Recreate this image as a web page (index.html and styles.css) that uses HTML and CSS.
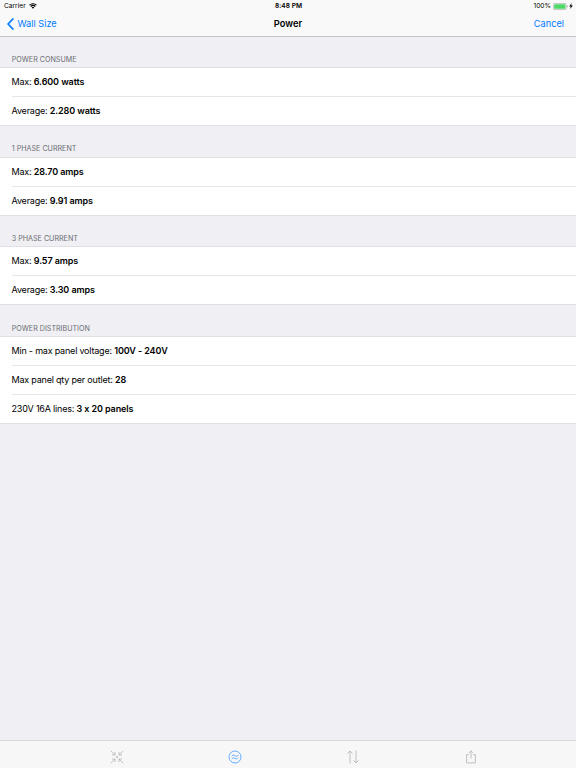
FILE: index.html
```html
<!DOCTYPE html>
<html lang="en">
<head>
    <meta charset="UTF-8">
    <meta name="viewport" content="width=device-width, initial-scale=1.0">
    <title>Power</title>
    <link rel="stylesheet" href="styles.css">
</head>
<body>
    <header class="header">
      <div class="status">
        <div class="carrier">
          <span>Carrier</span>
          <svg class="wifi" viewBox="0 0 16 12">
            <path d="M1 4.4a10 10 0 0 1 14 0M3.4 7a6.6 6.6 0 0 1 9.2 0" fill="none" stroke="#000" stroke-width="2.2"/>
            <path d="M8 11.6L5.4 9a3.7 3.7 0 0 1 5.2 0z"/>
          </svg>
        </div>
        <div class="time">8:48 PM</div>
        <div class="battery">
          <span>100%</span>
          <svg class="batteryIcon" viewBox="0 0 15 7">
            <rect x="0.4" y="0.4" width="12.8" height="6.2" rx="1.3" fill="#fff" stroke="#999" stroke-width="0.6"/>
            <rect x="1.2" y="1.2" width="11.2" height="4.6" rx="0.6" fill="#4cd964"/>
            <path d="M14 2.4v2.2q0.8-0.4 0.8-1.1t-0.8-1.1z" fill="#999"/>
          </svg>
          <svg class="bolt" viewBox="0 0 4 6">
            <path d="M2.6 0L0.2 3.4h1.5L1.2 6l2.6-3.6H2.2z"/>
          </svg>
        </div>
      </div>
      <nav class="navbar">
        <a class="back">
          <svg viewBox="0 0 7 12">
            <path d="M6.4 0.5L1.1 6l5.3 5.5" fill="none" stroke="#007aff" stroke-width="1.7"/>
          </svg>
          <span>Wall Size</span>
        </a>
        <h1 class="title">Power</h1>
        <a class="cancel">Cancel</a>
      </nav>
    </header>

    <main class="content">
      <section>
        <h2>POWER CONSUME</h2>
        <ul class="list">
          <li>Max: <b>6.600 watts</b></li>
          <li>Average: <b>2.280 watts</b></li>
        </ul>
      </section>
      <section>
        <h2>1 PHASE CURRENT</h2>
        <ul class="list">
          <li>Max: <b>28.70 amps</b></li>
          <li>Average: <b>9.91 amps</b></li>
        </ul>
      </section>
      <section>
        <h2>3 PHASE CURRENT</h2>
        <ul class="list">
          <li>Max: <b>9.57 amps</b></li>
          <li>Average: <b>3.30 amps</b></li>
        </ul>
      </section>
      <section>
        <h2>POWER DISTRIBUTION</h2>
        <ul class="list">
          <li>Min - max panel voltage: <b>100V - 240V</b></li>
          <li>Max panel qty per outlet: <b>28</b></li>
          <li>230V 16A lines: <b>3 x 20 panels</b></li>
        </ul>
      </section>
    </main>

    <footer class="tabbar">
      <a class="tab">
        <svg viewBox="0 0 14 14">
          <path d="M0.8 0.8L5 5M5 2v3H2M13.2 0.8L9 5M9 2v3h3M0.8 13.2L5 9M5 12V9H2M13.2 13.2L9 9M9 12V9h3"/>
          <circle cx="7" cy="7" r="0.8"/>
        </svg>
      </a>
      <a class="tab active">
        <svg viewBox="0 0 14 14">
          <circle cx="7" cy="7" r="6"/>
          <path d="M3.8 6.3c1-1.6 2-1.4 3.2-0.6s2.2 0.8 3.2-0.6M3.8 9c1-1.6 2-1.4 3.2-0.6s2.2 0.8 3.2-0.6"/>
        </svg>
      </a>
      <a class="tab">
        <svg viewBox="0 0 14 14">
          <path d="M4 13.4V1M1.4 3.6L4 1l2.6 2.6M10 0.6V13M7.4 10.4L10 13l2.6-2.6"/>
        </svg>
      </a>
      <a class="tab">
        <svg viewBox="0 0 14 14">
          <path d="M5 4.7H2.6v8.2h8.8V4.7H9M7 8.6V0.8M4.8 3L7 0.8 9.2 3"/>
        </svg>
      </a>
    </footer>
</body>
</html>
```
FILE: styles.css
```css
* {
  box-sizing: border-box;
}

body {
  margin: 0;
  height: 100vh;
  display: flex;
  flex-direction: column;
  overflow: hidden;
  font-family: Inter, "Liberation Sans", sans-serif;
  font-size: 9.2px;
  font-feature-settings: "calt" 0;
  background-color: #efeff4;
  color: #000;
}

svg {
  display: block;
}

.header {
  height: 37px;
  background-color: #f9f9f9;
  border-bottom: 1px solid #c4c4c7;
}

.status {
  display: grid;
  grid-template-columns: 1fr auto 1fr;
  align-items: center;
  height: 12px;
  padding: 0 3px 0 4px;
  font-size: 6.6px;
}

.carrier {
  display: flex;
  align-items: center;
  gap: 3px;
}

.wifi {
  width: 8px;
  height: 6px;
}

.time {
  font-weight: 600;
}

.battery {
  display: flex;
  align-items: center;
  justify-content: flex-end;
  gap: 2px;
}

.batteryIcon {
  width: 15px;
  height: 7px;
}

.bolt {
  width: 4px;
  height: 6px;
  margin-left: -1px;
}

.navbar {
  display: grid;
  grid-template-columns: 1fr auto 1fr;
  align-items: center;
  height: 23px;
  padding: 0 12px 0 7px;
}

.back {
  display: flex;
  align-items: center;
  gap: 3.5px;
  color: #007aff;
}

.back svg {
  width: 7px;
  height: 12px;
}

.title {
  margin: 0;
  padding-left: 5px;
  font-size: 9.3px;
  font-weight: 600;
}

.cancel {
  text-align: right;
  color: #007aff;
}

.content {
  flex: 1;
}

h2 {
  display: flex;
  align-items: flex-end;
  height: 31.4px;
  margin: 0;
  padding: 0 11.8px 3.2px;
  font-size: 7.15px;
  line-height: 9px;
  font-weight: 400;
  color: #6d6d72;
}

section:first-child h2 {
  height: 30px;
}

.list {
  margin: 0;
  padding: 0;
  list-style: none;
  background-color: #fff;
  border-top: 1px solid #e0e0e4;
  box-shadow: 0 1px 0 #e0e0e4;
}

.list li {
  height: 29.1px;
  margin-left: 11.5px;
  border-top: 1px solid #e6e6e9;
  font-size: 9px;
  line-height: 28px;
  letter-spacing: -0.2px;
}

.list li:first-child {
  height: 28.1px;
  border-top: none;
}

.list b {
  font-weight: 600;
  letter-spacing: -0.1px;
}

.tabbar {
  display: flex;
  justify-content: center;
  gap: 104px;
  height: 28px;
  padding: 9px 0 0 12px;
  background-color: #f7f7f8;
  border-top: 1px solid #d8d8dc;
}

.tab svg {
  width: 14px;
  height: 14px;
  fill: none;
  stroke: #b2b2b4;
  stroke-width: 0.8;
}

.tab.active svg {
  stroke: #3f9aff;
}
```
